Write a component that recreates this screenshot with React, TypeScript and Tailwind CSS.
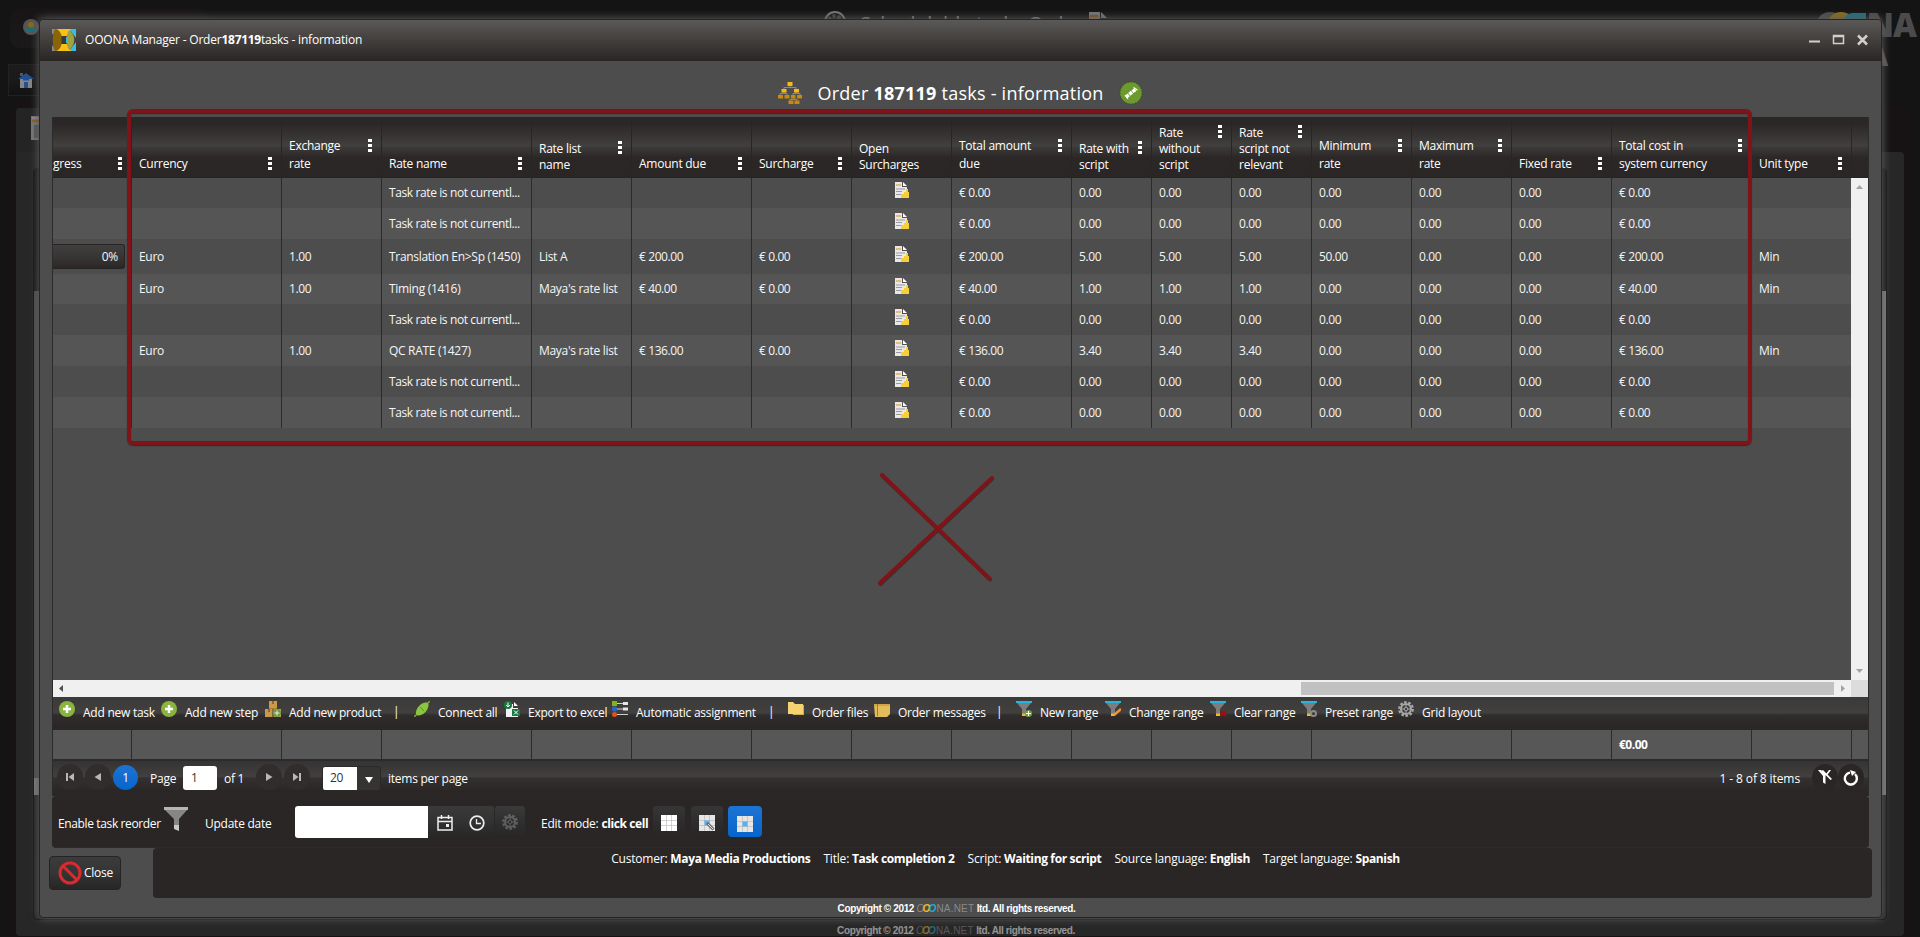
import type { ReactNode } from 'react';

type Column = { lines: string[]; width: string; loose?: boolean; menu?: boolean };

const columns: Column[] = [
  { lines: ['gress'], width: 'w-[79px]' },
  { lines: ['Currency'], width: 'w-[150px]' },
  { lines: ['Exchange', 'rate'], width: 'w-[100px]', loose: true },
  { lines: ['Rate name'], width: 'w-[150px]' },
  { lines: ['Rate list', 'name'], width: 'w-[100px]' },
  { lines: ['Amount due'], width: 'w-[120px]' },
  { lines: ['Surcharge'], width: 'w-[100px]' },
  { lines: ['Open', 'Surcharges'], width: 'w-[100px]', menu: false },
  { lines: ['Total amount', 'due'], width: 'w-[120px]', loose: true },
  { lines: ['Rate with', 'script'], width: 'w-[80px]' },
  { lines: ['Rate', 'without', 'script'], width: 'w-[80px]' },
  { lines: ['Rate', 'script not', 'relevant'], width: 'w-[80px]' },
  { lines: ['Minimum', 'rate'], width: 'w-[100px]', loose: true },
  { lines: ['Maximum', 'rate'], width: 'w-[100px]', loose: true },
  { lines: ['Fixed rate'], width: 'w-[100px]' },
  { lines: ['Total cost in', 'system currency'], width: 'w-[140px]', loose: true },
  { lines: ['Unit type'], width: 'w-[100px]' },
];

const NONE = 'Task rate is not currentl...';

const emptyRow = ['', '', '', NONE, '', '', '', 'icon', '€ 0.00', '0.00', '0.00', '0.00', '0.00', '0.00', '0.00', '€ 0.00', ''];

const rows: { height: string; cells: string[] }[] = [
  { height: 'h-[30px]', cells: emptyRow },
  { height: 'h-[31px]', cells: emptyRow },
  {
    height: 'h-[35px]',
    cells: ['0%', 'Euro', '1.00', 'Translation En>Sp (1450)', 'List A', '€ 200.00', '€ 0.00', 'icon', '€ 200.00', '5.00', '5.00', '5.00', '50.00', '0.00', '0.00', '€ 200.00', 'Min'],
  },
  {
    height: 'h-[30px]',
    cells: ['', 'Euro', '1.00', 'Timing (1416)', "Maya's rate list", '€ 40.00', '€ 0.00', 'icon', '€ 40.00', '1.00', '1.00', '1.00', '0.00', '0.00', '0.00', '€ 40.00', 'Min'],
  },
  { height: 'h-[31px]', cells: emptyRow },
  {
    height: 'h-[31px]',
    cells: ['', 'Euro', '1.00', 'QC RATE (1427)', "Maya's rate list", '€ 136.00', '€ 0.00', 'icon', '€ 136.00', '3.40', '3.40', '3.40', '0.00', '0.00', '0.00', '€ 136.00', 'Min'],
  },
  { height: 'h-[31px]', cells: emptyRow },
  { height: 'h-[31px]', cells: emptyRow },
];

export default function App() {
  return (
    <div className="relative h-[937px] w-[1920px] overflow-hidden bg-[#141414] font-['Open_Sans','Noto_Sans',sans-serif] text-[12px] tracking-[-0.25px] text-white">
      <Backdrop />
      {/* Task window */}
      <div className="absolute left-[39px] top-[19px] flex h-[899px] w-[1843px] flex-col rounded-[4px] border border-[#262525] bg-[#4d4d4d] shadow-[0_0_9px_1px_#5a5a5a]">
        <TitleBar />
        <Heading />
        <div className="ml-[12px] w-[1817px] border-x border-[#2b2b2b]">
          <GridHeader />
          <GridBody />
          <Toolbar />
          <Totals />
          <Pager />
        </div>
        <ReorderBar />
        <div className="flex h-[50px] justify-between pl-[9px] pr-[9px]">
          <button className="mt-[8px] flex h-[34px] w-[72px] items-center rounded-[4px] border border-[#252424] bg-linear-to-b from-[#3c3b3a] via-[#353535] to-[#262626] pl-[8px]">
            <svg width="24" height="24" viewBox="0 0 24 24" fill="none" stroke="#d92b2f" strokeWidth="3">
              <circle cx="12" cy="12" r="10" />
              <path d="M5 5l14 14" />
            </svg>
            <span className="ml-[2px]">Close</span>
          </button>
          <div className="flex w-[1719px] justify-center gap-[13px] rounded-[4px] bg-[#2a2626] pr-[14px] pt-[3px]">
            <Info label="Customer" value="Maya Media Productions" />
            <Info label="Title" value="Task completion 2" />
            <Info label="Script" value="Waiting for script" />
            <Info label="Source language" value="English" />
            <Info label="Target language" value="Spanish" />
          </div>
        </div>
        <div className="flex h-[19px] items-center justify-center pr-[8px] pt-[3px]">
          <Copyright />
        </div>
      </div>
      <Markup />
    </div>
  );
}

function Info({ label, value }: { label: string; value: string }) {
  return (
    <p className="whitespace-nowrap leading-[16px] tracking-[-0.2px]">
      {label}: <b className="font-bold tracking-[-0.36px]">{value}</b>
    </p>
  );
}

function Copyright() {
  return (
    <p className="whitespace-nowrap font-['Liberation_Sans',Arial,sans-serif] text-[10px] font-bold leading-[12px] tracking-[-0.37px]">
      Copyright © 2012{' '}
      <span className="font-normal tracking-[0.2px] text-[#8a8a8a]">
        <i>O</i>
        <i className="-ml-[2px] font-bold text-[#f4b81c]">O</i>
        <i className="-ml-[2px] font-bold text-[#29a9cf]">O</i>NA.NET
      </span>{' '}
      ltd. All rights reserved.
    </p>
  );
}

// Dimmed page behind the window
function Backdrop() {
  return (
    <div className="relative h-full w-full">
      <div className="absolute left-[10px] top-[8px] h-[40px] w-[200px] rounded-[10px] bg-linear-to-b from-[#171515] to-[#1b1919]" />
      <svg className="absolute left-[23px] top-[19px]" width="16" height="16" viewBox="0 0 16 16">
        <circle cx="8" cy="8" r="8" fill="#565656" />
        <circle cx="8" cy="6" r="3" fill="#8a6a14" />
        <path d="M2.500 13c0-3 2-4.500 5.500-4.500s5.500 1.500 5.500 4.500z" fill="#176f80" />
      </svg>
      <div className="absolute left-[8px] top-[64px] h-[32px] w-[60px] border border-[#222] bg-linear-to-b from-[#1d1b1b] via-[#1b1a1a] to-[#131212]" />
      <svg className="absolute left-[18px] top-[73px]" width="16" height="16" viewBox="0 0 16 16">
        <path d="M2 6h12v9H2z" fill="#85868a" />
        <path d="M2 0h3v3H2z" fill="#55565a" />
        <path d="M8 0l8 6H0z" fill="#24508f" />
        <path d="M6 9h4v6H6zM5 6h6v1.500H5z" fill="#24508f" />
      </svg>
      <div className="absolute left-0 top-[101px] h-[836px] w-full bg-[#171314]" />
      <div className="absolute left-0 top-[101px] h-[836px] w-[12px] bg-[#141414]" />
      <div className="absolute left-[1908px] top-[101px] h-[836px] w-[12px] bg-[#141414]" />
      <div className="absolute left-[16px] top-[108px] h-[60px] w-[80px] rounded-[4px] bg-[#242424]" />
      <div className="absolute left-[16px] top-[152px] h-[784px] w-[1888px] rounded-[4px] bg-[#272727]" />
      <svg className="absolute left-[31px] top-[116px]" width="16" height="24" viewBox="0 0 16 24">
        <path d="M0 0h16v24H0z" fill="#777" />
        <path d="M1 4h15v2H1z" fill="#955f10" />
        <path d="M3 9h13v13H3z" fill="#55585c" />
        <path d="M1 1h15v2H1z" fill="#8b8b8b" />
      </svg>
      <div className="absolute left-[33px] top-[168px] h-[752px] w-[1854px] rounded-[4px] border border-[#151414] bg-linear-to-b from-[#171515] to-[#2a2929]" />
      <div className="absolute left-[34px] top-[291px] h-[504px] w-[5px] bg-[#4f4d4c]" />
      <div className="absolute left-[34px] top-[778px] h-[17px] w-[5px] bg-[#7d7d7d]" />
      <div className="absolute left-[1882px] top-[291px] h-[504px] w-[4px] bg-[#858585]" />
      <svg className="absolute left-[824px] top-[11px]" width="24" height="24" viewBox="0 0 24 24" fill="none">
        <circle cx="11" cy="11" r="10" stroke="#777" strokeWidth="2" />
        <circle cx="11" cy="11" r="6" stroke="#444" strokeWidth="4" strokeDasharray="3 2" />
      </svg>
      <p className="absolute left-[860px] top-[9px] whitespace-nowrap text-[20px] tracking-[-0.2px] text-[#858585]">Schedulable tasks Order</p>
      <svg className="absolute left-[1089px] top-[12px]" width="22" height="20" viewBox="0 0 22 20">
        <path d="M0 0h11v20H0z" fill="#777" />
        <path d="M12 0l6 6h-6z" fill="#777" />
        <path d="M1 3h8v2H1z" fill="#8d5210" />
      </svg>
      <svg className="absolute left-[1816px] top-[12px]" width="60" height="30" viewBox="0 0 60 30">
        <circle cx="14" cy="14" r="14" fill="#4c4c4e" />
        <circle cx="25" cy="14" r="14" fill="#8b6f1e" />
        <path d="M28 7a10 10 0 0 1 8-6h14v16H28z" fill="#226f82" />
      </svg>
      <p className="absolute right-[4px] top-[11px] text-[33px] font-black leading-[28px] tracking-[-1px] text-[#4b4b4d]">NA</p>
      <p className="absolute right-[32px] top-[46px] text-[26px] font-black leading-[20px] text-[#5b5b5d]">A</p>
      <div className="absolute bottom-0 left-0 flex h-[13px] w-full items-center justify-center overflow-hidden pr-[8px] opacity-50">
        <Copyright />
      </div>
    </div>
  );
}

function TitleBar() {
  return (
    <div className="flex h-[41px] shrink-0 items-center rounded-t-[4px] border-b border-[#282524] bg-linear-to-b from-[#5b5957] to-[#2b2726] pl-[12px] pr-[12px]">
      <svg width="24" height="22" viewBox="0 0 24 22">
        <path d="M0 0h5v5H0zM0 22h6L0 16z" fill="#8b8b8f" />
        <path d="M24 0h-7l7 9zM24 22h-7l7-9z" fill="#35bfe4" />
        <path d="M5 0h14l-4 7H9zM5 22h14l-4-7H9z" fill="#fbbf17" />
        <path d="M3 0c5 1 7 5 7 11s-2 10-7 11C0 17 0 5 3 0z" fill="#8a6508" />
        <path d="M17 1c7 5 7 15 0 20-3-4-3-16 0-20z" fill="#a2a23c" />
        <path d="M9.500 7.500h5v7h-5z" fill="#3a3737" />
        <path d="M14 8h2v6h-2z" fill="#35bfe4" />
      </svg>
      <p className="ml-[9px] flex-1 whitespace-nowrap tracking-[-0.2px]">
        OOONA Manager - Order<b className="tracking-[-0.3px]">187119</b>tasks - information
      </p>
      <svg width="60" height="14" viewBox="0 0 60 14" fill="none" stroke="#d2d0cf">
        <path d="M0 8.500h11" strokeWidth="2" />
        <path d="M24.500 2.500h10v8h-10zM24.500 3.500h10" strokeWidth="1.500" />
        <path d="M49 2.500l9 9M58 2.500l-9 9" strokeWidth="2.500" />
      </svg>
    </div>
  );
}

function Heading() {
  return (
    <div className="flex h-[56px] shrink-0 items-center justify-center pt-[7px]">
      <svg width="24" height="22" viewBox="0 0 24 22">
        <path d="M12 3v3M6 8V5.500h12V8M2 14v-2.500h7V14M15 14v-2.500h7V14M12 20v-2.500h7V20M6 9v2M18 9v2M16 14v3" fill="none" stroke="#8a8a8a" />
        <path d="M9.500 0h5v4h-5zM3.500 7h5v3.500h-5zM16 7h5v3.500h-5z" fill="#fdb813" />
        <path d="M0 13h5v3.500H0zM6.500 13h5v3.500h-5zM13 13h4.500v3.500H13zM19 13h5v3.500h-5zM10.500 18.500h5V22h-5zM16.500 18.500h5V22h-5z" fill="#c98a0a" />
      </svg>
      <h1 className="mx-[15px] whitespace-nowrap text-[18px] leading-[24px] tracking-[0.24px]">
        Order <b>187119</b> tasks - information
      </h1>
      <svg width="24" height="24" viewBox="0 0 24 24">
        <circle cx="12" cy="12" r="11" fill="#6b9a2e" stroke="#3c4a28" strokeDasharray="1.500 1.500" />
        <path d="M7 16l10-8" stroke="#fff" strokeWidth="3.500" strokeDasharray="3.500 .7" />
        <path d="M6 14l3 4M14.500 6.500l4 2.500" stroke="#fff" strokeWidth="1.200" />
      </svg>
    </div>
  );
}

function GridHeader() {
  return (
    <div className="flex h-[61px] border-b border-[#262323] bg-[linear-gradient(#2b2726_0,#2b2726_12%,#41403e_48%,#3a3837_52%,#2b2726_68%,#2a2626_100%)]">
      {columns.map((col, i) => (
        <div
          key={i}
          className={`flex shrink-0 items-end justify-between border-r border-[#272525] pb-[4px] pr-[9px] ${i === 0 ? 'pl-0' : 'pl-[7px]'} ${col.width}`}
        >
          <div className={col.loose || col.lines.length === 1 ? 'leading-[18px]' : 'leading-[16px]'}>
            {col.lines.map((line) => (
              <p key={line} className="whitespace-nowrap tracking-[-0.25px]">{line}</p>
            ))}
          </div>
          {col.menu !== false && (
            <svg className="mt-[2px] self-end" width="4" height={col.loose ? 34 : col.lines.length * 16} fill="#fff">
              <path d="M0 0h4v3H0zM0 5h4v3H0zM0 10h4v3H0z" />
            </svg>
          )}
        </div>
      ))}
    </div>
  );
}

function GridBody() {
  return (
    <div className="h-[519px]">
      <div className="flex h-[502px]">
        <div className="w-[1798px] bg-[#4d4d4d]">
          {rows.map((row, r) => (
            <div key={r} className={`flex ${row.height} ${r % 2 ? 'bg-[#555]' : 'bg-[#4d4d4d]'}`}>
              {columns.map((col, c) => (
                <div
                  key={c}
                  className={`flex shrink-0 items-center whitespace-nowrap border-[#2b2b2b] text-[#f6f6f6] ${c < 16 ? 'border-r' : 'mr-[-1px]'} ${c === 0 ? '' : 'pl-[7px]'} ${col.width}`}
                >
                  <Cell value={row.cells[c]} column={c} />
                </div>
              ))}
            </div>
          ))}
        </div>
        <div className="z-10 flex w-[17px] flex-col justify-between bg-[#f0f0f0] px-[5px] py-[7px]">
          <svg width="7" height="4" fill="#a3a3a3"><path d="M0 4l3.500-4L7 4z" /></svg>
          <svg width="7" height="4" fill="#a3a3a3"><path d="M0 0l3.500 4L7 0z" /></svg>
        </div>
      </div>
      <div className="flex h-[17px] bg-[#f0f0f0]">
        <div className="flex w-[1248px] items-center pl-[6px]">
          <svg width="4" height="7" fill="#505050"><path d="M4 0L0 3.500 4 7z" /></svg>
        </div>
        <div className="my-[2px] w-[533px] bg-[#c1c1c1]" />
        <div className="flex w-[17px] items-center justify-center">
          <svg width="4" height="7" fill="#a3a3a3"><path d="M0 0l4 3.500L0 7z" /></svg>
        </div>
        <div className="flex-1 bg-[#dcdcdc]" />
      </div>
    </div>
  );
}

function Cell({ value, column }: { value: string; column: number }) {
  if (value === 'icon') {
    return (
      <svg className="mb-[6px] ml-[36px]" width="14" height="16" viewBox="0 0 14 16">
        <path d="M0 0h7v5h5v11H0z" fill="#e8e8e8" />
        <path d="M8 0l4 4H8z" fill="#fff" />
        <path d="M1 2.500h5v1H1z" fill="#e08a1c" />
        <path d="M1 6.500h9v1H1zM1 9h6v1H1zM1 12h5v1H1z" fill="#9a9a9a" />
        <path d="M6 12h3v-2h2V7h2v3h1v6H6z" fill="#f7cf3c" />
      </svg>
    );
  }
  if (column === 0 && value) {
    return (
      <div className="flex h-[25px] w-[72px] items-center justify-end rounded-r-[3px] border border-l-0 border-[#262424] bg-linear-to-b from-[#42403e] via-[#383635] to-[#2b2726] pr-[6px]">
        {value}
      </div>
    );
  }
  if (value === NONE) return <span className="tracking-[-0.39px]">{value}</span>;
  return <span className={/^[€\d]/.test(value) ? 'tracking-[-0.4px]' : 'tracking-[-0.3px]'}>{value}</span>;
}

function ToolItem({ icon, label, width }: { icon: ReactNode; label: string; width: string }) {
  return (
    <div className={`flex shrink-0 ${width}`}>
      <svg className="mt-[4px] shrink-0" width="16" height="16" viewBox="0 0 16 16">{icon}</svg>
      <span className="ml-[8px] mt-[7px] whitespace-nowrap leading-[18px]">{label}</span>
    </div>
  );
}

function Divider({ width }: { width: string }) {
  return <span className={`mt-[6px] shrink-0 leading-[18px] ${width}`}>|</span>;
}

const plusIcon = (
  <>
    <circle cx="8" cy="8" r="8" fill="#8ab43f" />
    <path d="M8 4v8M4 8h8" stroke="#fff" strokeWidth="2.500" />
  </>
);

const funnel = (
  <>
    <path d="M0 0h16v2H0z" fill="#27b5df" />
    <path d="M1 2h14l-5 6v7H6V8z" fill="#7d7d7d" />
    <path d="M6 12.500h4V15H6z" fill="#f4b81c" />
  </>
);

const gear = (
  <>
    <circle cx="8" cy="8" r="6.800" fill="none" stroke="#a8a8a8" strokeWidth="2.200" strokeDasharray="2.600 1.670" />
    <circle cx="8" cy="8" r="5" fill="none" stroke="#a8a8a8" strokeWidth="2" />
    <circle cx="8" cy="8" r="1.800" fill="none" stroke="#a8a8a8" />
    <path d="M8 3v3M8 10v3M3 8h3M10 8h3" stroke="#a8a8a8" />
  </>
);

function Toolbar() {
  return (
    <div className="flex h-[33px] border-b-2 border-[#2a2827] bg-[linear-gradient(#3a3a38_0,#42403e_50%,#2f2c2b_60%,#2a2626_100%)] pl-[6px]">
      <ToolItem width="w-[102px]" label="Add new task" icon={plusIcon} />
      <ToolItem width="w-[104px]" label="Add new step" icon={plusIcon} />
      <ToolItem
        width="w-[128px]"
        label="Add new product"
        icon={
          <>
            <path d="M4 0h8v7H4zM0 8h7.500v8H0zM8.500 8H16v8H8.500z" fill="#c89a4a" />
            <path d="M4 7h8v1H4z" fill="#a97c30" />
            <path d="M7 0h2v3H7zM3 8h2v3H3z" fill="#8f6726" />
            <circle cx="12" cy="12" r="4" fill="#6d9c46" />
            <path d="M12 9.500v5M9.500 12h5" stroke="#e5efdc" />
          </>
        }
      />
      <Divider width="w-[21px]" />
      <ToolItem
        width="w-[90px]"
        label="Connect all"
        icon={
          <>
            <path d="M0 16L16 0" stroke="#7cab35" strokeWidth="1.500" />
            <path d="M2 13C1 8 7 1 13 1.500L14.500 3C15 9 9 15 3.500 14.500z" fill="#8bc541" />
            <path d="M6 6l4 4" stroke="#5f8f28" />
          </>
        }
      />
      <ToolItem
        width="w-[108px]"
        label="Export to excel"
        icon={
          <>
            <path d="M2 3h7v4h5v9H2z" fill="#f3f3f3" />
            <path d="M10 1l4 4h-4z" fill="#fff" />
            <circle cx="4" cy="4" r="4" fill="#157a41" />
            <path d="M4 1.500v4M2.200 4L4 6l1.800-2" stroke="#fff" fill="none" />
            <path d="M8 8h8v7H8z" fill="#157a41" />
            <path d="M10 9.500l4 4M14 9.500l-4 4" stroke="#fff" />
          </>
        }
      />
      <ToolItem
        width="w-[156px]"
        label="Automatic assignment"
        icon={
          <>
            <path d="M5 2.500h11M5 8h11M5 13.500h11" stroke="#cfcfcf" />
            <path d="M11 1h5v3h-5zM11 6.500h5v3h-5z" fill="#e6e6e6" />
            <path d="M0 0h5v5H0z" fill="#7cb518" />
            <circle cx="2.500" cy="8" r="2.700" fill="#2766c8" />
            <circle cx="2.500" cy="13.500" r="2.500" fill="#e0501c" />
          </>
        }
      />
      <Divider width="w-[20px]" />
      <ToolItem
        width="w-[86px]"
        label="Order files"
        icon={
          <>
            <path d="M2 4h14v10H5z" fill="#d3ab45" />
            <path d="M0 1h5l2 2h8v10H0z" fill="#f6d271" />
          </>
        }
      />
      <ToolItem
        width="w-[122px]"
        label="Order messages"
        icon={
          <>
            <path d="M0 3h16v10l-3 3H1z" fill="#e3bd5c" />
            <path d="M0 3h16v2H0z" fill="#cfa545" />
            <path d="M3.500 3v12" stroke="#c4683c" />
          </>
        }
      />
      <Divider width="w-[20px]" />
      <ToolItem width="w-[89px]" label="New range" icon={<>{funnel}<circle cx="12.500" cy="12.500" r="3.500" fill="#6d9c46" /><path d="M12.500 10v5M10 12.500h5" stroke="#fff" /></>} />
      <ToolItem width="w-[105px]" label="Change range" icon={<>{funnel}<path d="M9 14l7-6" stroke="#f0923a" strokeWidth="2.500" /></>} />
      <ToolItem width="w-[91px]" label="Clear range" icon={<>{funnel}<path d="M10.500 10l5 5M15.500 10l-5 5" stroke="#a30d0d" strokeWidth="2" /></>} />
      <ToolItem width="w-[97px]" label="Preset range" icon={<>{funnel}<circle cx="12.500" cy="12.500" r="2.500" fill="none" stroke="#8b8b8b" strokeWidth="2" /></>} />
      <ToolItem width="w-[90px]" label="Grid layout" icon={gear} />
    </div>
  );
}

function Totals() {
  return (
    <div className="flex h-[31px] border-b-2 border-[#2b2b2b] bg-[#575757]">
      {columns.map((col, i) => (
        <div key={i} className={`flex shrink-0 items-center border-r border-[#2b2b2b] pl-[7px] font-bold tracking-[-0.5px] ${col.width}`}>
          {i === 15 && '€0.00'}
        </div>
      ))}
    </div>
  );
}

function RoundButton({ d }: { d: string }) {
  return (
    <div className="flex h-[26px] w-[26px] items-center justify-center rounded-full bg-[#302d2c]">
      <svg width="10" height="10" viewBox="0 0 10 10" fill="#b9b7b6"><path d={d} /></svg>
    </div>
  );
}

function Pager() {
  return (
    <div className="flex h-[35px] items-center border-b border-[#2a2828] bg-[linear-gradient(#363433_0,#42403e_46%,#33302f_50%,#2a2626_90%)] pb-[2px] pl-[4px]">
      <div className="flex gap-[2px]">
        <RoundButton d="M1 1h2v8H1zM9 1v8L3.500 5z" />
        <RoundButton d="M8 1v8L1.500 5z" />
      </div>
      <div className="ml-[2px] flex h-[25px] w-[25px] items-center justify-center rounded-full bg-linear-to-b from-[#1c74d4] to-[#0565cc] pt-[1px]">1</div>
      <span className="ml-[12px] mt-[4px] w-[33px]">Page</span>
      <div className="mt-[2px] flex h-[24px] w-[34px] items-center rounded-[3px] bg-white pl-[8px] text-[#333]">1</div>
      <span className="ml-[7px] mt-[4px] w-[32px] whitespace-nowrap">of 1</span>
      <div className="flex gap-[2px]">
        <RoundButton d="M2 1v8l6.500-4z" />
        <RoundButton d="M7 1h2v8H7zM1 1v8l5.500-4z" />
      </div>
      <div className="ml-[12px] mt-[2px] flex h-[25px] w-[59px] overflow-hidden rounded-[3px] border border-[#2a2828] bg-[#363433]">
        <div className="flex w-[34px] items-center bg-white pl-[7px] text-[#333]">20</div>
        <div className="flex flex-1 items-center justify-center pt-[3px]">
          <svg width="8" height="6" fill="#fff"><path d="M0 0h8L4 6z" /></svg>
        </div>
      </div>
      <span className="ml-[7px] mt-[4px] flex-1">items per page</span>
      <span className="mt-[4px] tracking-[-0.1px]">1 - 8 of 8 items</span>
      <div className="ml-[12px] flex h-[26px] w-[26px] items-center justify-center rounded-full bg-[#2a2626]">
        <svg width="16" height="16" viewBox="0 0 16 16" fill="#fff">
          <path d="M1 1h3l4.500 5v9L6 13.500V7zM9 5l3-4h2l-4 5.500zM6 1l9 9-1.500 1L4.500 2z" />
        </svg>
      </div>
      <div className="mr-[4px] flex h-[26px] w-[26px] items-center justify-center rounded-full bg-[#2a2626]">
        <svg className="mt-[2px]" width="16" height="16" viewBox="0 0 16 16">
          <path d="M12 4.200A6 6 0 1 1 7 2.600" fill="none" stroke="#fff" strokeWidth="2.400" />
          <path d="M7 0l6 2-4 4z" fill="#fff" />
        </svg>
      </div>
    </div>
  );
}

function GridGlyph({ cell = '#e6e6e6', children }: { cell?: string; children?: ReactNode }) {
  return (
    <svg width="16" height="16" viewBox="0 0 16 16">
      <path d="M0 0h16v16H0z" fill="#a9a9a9" />
      <path d="M0 0h5v5H0zM5.500 0h5v5h-5zM11 0h5v5h-5zM0 5.500h5v5H0zM5.500 5.500h5v5h-5zM11 5.500h5v5h-5zM0 11h5v5H0zM5.500 11h5v5h-5zM11 11h5v5h-5z" fill={cell} />
      {children}
    </svg>
  );
}

function ReorderBar() {
  return (
    <div className="ml-[12px] flex h-[52px] w-[1817px] shrink-0 items-center rounded-[4px] border-b border-[#2d2a29] bg-[#2a2626] pl-[6px]">
      <span className="mt-[4px] w-[106px] whitespace-nowrap tracking-[-0.37px]">Enable task reorder</span>
      <svg className="mb-[5px]" width="24" height="24" viewBox="0 0 24 24">
        <path d="M0 0h24v3H0z" fill="#b5b5b5" />
        <path d="M1 3h22l-8 9v11l-5-3v-8z" fill="#868686" />
        <path d="M10 18h5v6l-5-2z" fill="#c9c9c9" />
      </svg>
      <span className="ml-[17px] mt-[5px] w-[90px] whitespace-nowrap">Update date</span>
      <div className="h-[32px] w-[133px] rounded-l-[3px] bg-white" />
      <div className="flex h-[32px] w-[66px] items-center gap-[16px] rounded-r-[3px] bg-linear-to-b from-[#3a3a3a] via-[#323232] to-[#272525] pl-[9px] pt-[3px]">
        <svg width="16" height="16" viewBox="0 0 16 16" fill="none" stroke="#eee" strokeWidth="1.500">
          <path d="M1 2.500h14v12.500H1zM1 6.500h14M4.500 0v4M11.500 0v4" />
          <path d="M9 9h3v3H9z" fill="#eee" stroke="none" />
        </svg>
        <svg width="16" height="16" viewBox="0 0 16 16" fill="none" stroke="#eee" strokeWidth="1.700">
          <circle cx="8" cy="8" r="6.800" />
          <path d="M7.500 4v4.500H12" strokeWidth="1.300" />
        </svg>
      </div>
      <div className="ml-[1px] flex h-[32px] w-[30px] items-center justify-center rounded-[3px] bg-linear-to-b from-[#3a3a3a] to-[#272525]">
        <svg className="opacity-40" width="16" height="16" viewBox="0 0 16 16">{gear}</svg>
      </div>
      <span className="ml-[16px] mt-[5px] w-[112px] whitespace-nowrap">
        Edit mode: <b className="tracking-[-0.4px]">click cell</b>
      </span>
      <div className="flex h-[31px] w-[32px] items-center justify-center rounded-[4px] bg-linear-to-b from-[#363636] to-[#272525] pt-[3px]">
        <GridGlyph cell="#fff" />
      </div>
      <div className="ml-[6px] flex h-[31px] w-[32px] items-center justify-center rounded-[4px] bg-linear-to-b from-[#363636] to-[#272525] pt-[3px]">
        <GridGlyph>
          <path d="M5.500 5.500h5v5h-5z" fill="#5cb0f0" />
          <path d="M8 8l6.500 6.500" stroke="#6b6b6b" strokeWidth="3" />
          <path d="M9 9l5 5" stroke="#ddd" />
        </GridGlyph>
      </div>
      <div className="ml-[5px] flex h-[31px] w-[34px] items-center justify-center rounded-[4px] bg-linear-to-b from-[#1c74d4] to-[#0565cc] pt-[4px]">
        <GridGlyph>
          <path d="M5.500 5.500h5v5h-5z" fill="#5cb0f0" />
        </GridGlyph>
      </div>
    </div>
  );
}

// Red frame and cross drawn on top of the grid
function Markup() {
  return (
    <>
      <div className="absolute left-[127px] top-[109px] h-[336px] w-[1625px] rounded-[6px] border-4 border-[#801317] shadow-[0_1px_1px_#2b2b2b,inset_0_1px_1px_#2b2b2b]" />
      <svg className="absolute left-[870px] top-[465px]" width="132" height="128" viewBox="0 0 132 128" strokeLinecap="round">
        <path d="M12.500 11L120 114.500M122 14L10.500 119" stroke="#333" strokeWidth="4" />
        <path d="M12 10L119.500 113.500M122 13L10 118" stroke="#801317" strokeWidth="4" />
      </svg>
    </>
  );
}
